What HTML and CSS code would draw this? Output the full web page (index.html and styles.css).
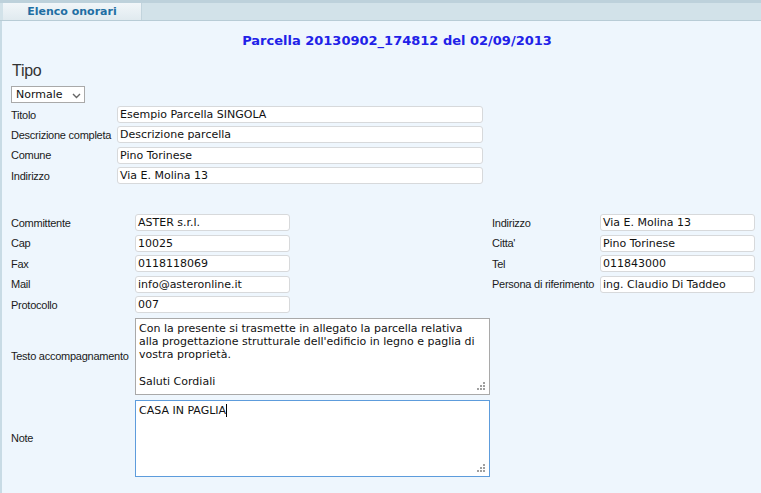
FILE: index.html
```html
<!DOCTYPE html>
<html lang="it">
<head>
<meta charset="utf-8">
<title>Parcella</title>
<link rel="stylesheet" href="styles.css">
</head>
<body>
<div class="tabs">
  <div class="tab">Elenco onorari</div>
</div>
<div class="page">
  <h1 class="title">Parcella 20130902_174812 del 02/09/2013</h1>
  <div class="tipo">Tipo</div>
  <div class="select"><span>Normale</span>
    <svg class="chev" width="9" height="6" viewBox="0 0 9 6"><path d="M1 1 L4.5 4.5 L8 1" fill="none" stroke="#666" stroke-width="1.4"/></svg>
  </div>
  <div class="grid1">
    <label class="lbl">Titolo</label><div class="inp">Esempio Parcella SINGOLA</div>
    <label class="lbl">Descrizione completa</label><div class="inp">Descrizione parcella</div>
    <label class="lbl">Comune</label><div class="inp">Pino Torinese</div>
    <label class="lbl">Indirizzo</label><div class="inp">Via E. Molina 13</div>
  </div>
  <div class="grid2">
    <label class="lbl">Committente</label><div class="inp">ASTER s.r.l.</div><span></span>
    <label class="lbl">Indirizzo</label><div class="inp">Via E. Molina 13</div>
    <label class="lbl">Cap</label><div class="inp">10025</div><span></span>
    <label class="lbl">Citta'</label><div class="inp">Pino Torinese</div>
    <label class="lbl">Fax</label><div class="inp">0118118069</div><span></span>
    <label class="lbl">Tel</label><div class="inp">011843000</div>
    <label class="lbl">Mail</label><div class="inp">info@asteronline.it</div><span></span>
    <label class="lbl">Persona di riferimento</label><div class="inp">ing. Claudio Di Taddeo</div>
    <label class="lbl">Protocollo</label><div class="inp">007</div>
    <label class="lbl first">Testo accompagnamento</label>
    <div class="area">Con la presente si trasmette in allegato la parcella relativa
alla progettazione strutturale dell'edificio in legno e paglia di
vostra proprietà.

Saluti Cordiali<svg class="grip" width="8" height="8" viewBox="0 0 8 8"><g fill="#a0a0a0"><rect x="6" y="0" width="2" height="2"/><rect x="3" y="3" width="2" height="2"/><rect x="6" y="3" width="2" height="2"/><rect x="0" y="6" width="2" height="2"/><rect x="3" y="6" width="2" height="2"/><rect x="6" y="6" width="2" height="2"/></g></svg></div>
    <label class="lbl first">Note</label>
    <div class="area focus">CASA IN PAGLIA<span class="caret"></span><svg class="grip" width="8" height="8" viewBox="0 0 8 8"><g fill="#a0a0a0"><rect x="6" y="0" width="2" height="2"/><rect x="3" y="3" width="2" height="2"/><rect x="6" y="3" width="2" height="2"/><rect x="0" y="6" width="2" height="2"/><rect x="3" y="6" width="2" height="2"/><rect x="6" y="6" width="2" height="2"/></g></svg></div>
  </div>
</div>
</body>
</html>
```

FILE: styles.css
```css
html, body {
  margin: 0;
  padding: 0;
  height: 100%;
}
body {
  background: #eef6fd;
  font-family: "DejaVu Sans", Verdana, sans-serif;
  display: flex;
  flex-direction: column;
}
.tabs {
  height: 17px;
  border-top: 3px solid #bdd1db;
  border-bottom: 1px solid #b8ccd6;
  background: #d2e2e9;
  display: flex;
  padding-left: 3px;
  flex: none;
}
.tab {
  width: 138px;
  background: linear-gradient(#f1f6f9, #e0eaef);
  border-right: 1px solid #c2d4dd;
  font-weight: bold;
  font-size: 11px;
  color: #1f6ea3;
  text-align: center;
  line-height: 17px;
}
.page {
  flex: 1;
  border-left: 2px solid #c8dbe5;
  padding-left: 9px;
  padding-top: 12px;
}
.title {
  margin: 0;
  font-size: 13px;
  line-height: 16px;
  font-weight: bold;
  color: #2121e8;
  text-align: center;
  padding-left: 22px;
}
.tipo {
  margin-top: 13px;
  font-family: "Liberation Sans", Arial, sans-serif;
  font-size: 16px;
  line-height: 18px;
  color: #333;
  letter-spacing: -0.3px;
  padding-left: 1px;
}
.select {
  margin-top: 6px;
  width: 68px;
  height: 15px;
  border: 1px solid #a9a9a9;
  background: #fff;
  display: flex;
  align-items: center;
  justify-content: space-between;
  padding: 0 0 0 4px;
  font-size: 11px;
  color: #111;
}
.select .chev {
  margin-right: 3px;
  margin-top: 2px;
}
.lbl {
  font-family: "Liberation Sans", Arial, sans-serif;
  font-size: 11px;
  letter-spacing: -0.25px;
  color: #1a1a1a;
  white-space: nowrap;
  align-self: center;
}
.lbl.first {
  grid-column: 1;
}
.inp {
  height: 15px;
  border: 1px solid #d7d9db;
  border-radius: 3px;
  background: #fff;
  font-size: 11px;
  line-height: 15px;
  padding-left: 2px;
  color: #111;
  white-space: nowrap;
  overflow: hidden;
}
.grid1 {
  margin-top: 3px;
  display: grid;
  grid-template-columns: 106px 366px;
  row-gap: 3.4px;
}
.grid2 {
  margin-top: 30px;
  display: grid;
  grid-template-columns: 124px 155px 202px 108px 155px;
  grid-auto-rows: auto;
  row-gap: 3.5px;
  align-items: center;
}
.grid2 .area {
  grid-column: 2 / span 4;
}
.area {
  position: relative;
  width: 347px;
  height: 71px;
  margin-top: 1px;
  border: 1px solid #a9a9a9;
  background: #fff;
  font-size: 11px;
  line-height: 13.3px;
  padding: 3px 3px 1px 3px;
  white-space: pre-wrap;
  color: #111;
}
.area.focus {
  border-color: #5d9cdc;
  margin-top: 2px;
}
.caret {
  display: inline-block;
  width: 1px;
  height: 13px;
  background: #000;
  vertical-align: -3px;
}
.grip {
  position: absolute;
  right: 4px;
  bottom: 4px;
}
```
